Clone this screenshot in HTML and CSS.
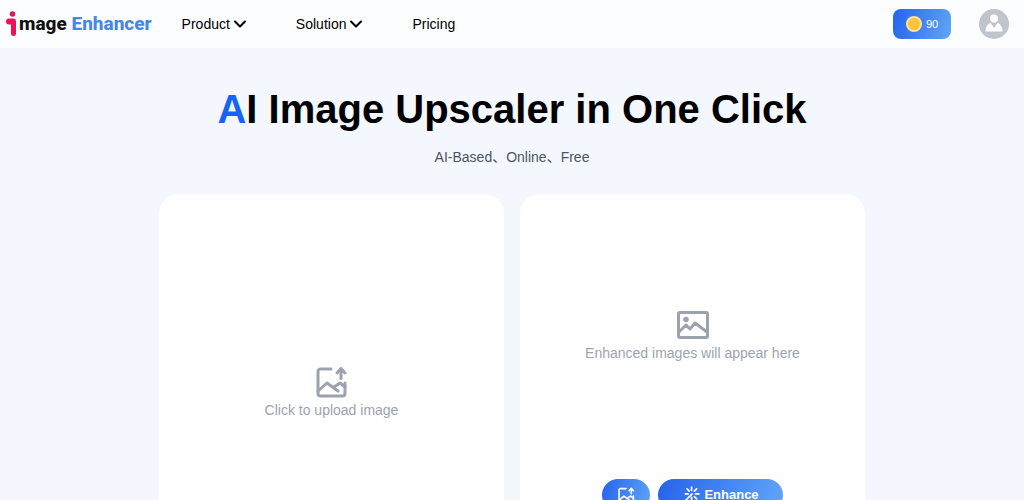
FILE: index.html
```html
<!DOCTYPE html>
<html lang="en">
<head>
    <meta charset="UTF-8">
    <meta name="viewport" content="width=device-width, initial-scale=1.0">
    <title>AI Image Upscaler</title>
    <link rel="stylesheet" href="styles.css">
</head>
<body>
    <header class="navbar">
        <a class="logo" href="#">
            <svg class="logo-mark" width="12" height="26" viewBox="0 0 12 26" aria-hidden="true">
                <circle cx="6.500" cy="3" r="2.800" fill="#d81b60"/>
                <path d="M3 7.500H7a3 3 0 0 1 3 3V22.500a2.500 2.500 0 0 1-5 0V13.500H3a3 3 0 0 1 0-6z" fill="#ee1155"/>
            </svg>
            <span>mage <span class="logo-blue">Enhancer</span></span>
        </a>
        <nav class="menu">
            <button type="button" class="menu-item">Product
                <svg width="12" height="8" viewBox="0 0 12 8" aria-hidden="true"><path d="M1 1.500l5 5 5-5"/></svg>
            </button>
            <button type="button" class="menu-item">Solution
                <svg width="12" height="8" viewBox="0 0 12 8" aria-hidden="true"><path d="M1 1.500l5 5 5-5"/></svg>
            </button>
            <a class="menu-item" href="#">Pricing</a>
        </nav>
        <div class="account">
            <button type="button" class="credits">
                <svg width="16" height="16" viewBox="0 0 16 16" aria-hidden="true">
                    <circle cx="8" cy="8" r="8" fill="#fde29a"/>
                    <circle cx="8" cy="8" r="6" fill="#fbc23c"/>
                </svg>
                90
            </button>
            <button type="button" class="avatar" aria-label="Account">
                <svg width="30" height="30" viewBox="0 0 30 30" aria-hidden="true">
                    <circle cx="15" cy="15" r="15" fill="#c0c4cc"/>
                    <circle cx="15" cy="9.500" r="4" fill="#fff"/>
                    <path d="M6.500 22.500c0-4.500 2-7.500 5-8.500l3.500 5 3.500-5c3 1 5 4 5 8.500z" fill="#fff"/>
                </svg>
            </button>
        </div>
    </header>

    <main class="container">
        <h1><span class="highlight">A</span>I Image Upscaler in One Click</h1>
        <p class="subtitle">AI-Based、Online、Free</p>

        <div class="panels">
            <button type="button" class="card upload">
                <svg class="icon" width="32" height="32" viewBox="0 0 32 32" aria-hidden="true">
                    <path d="M15 3H4.500A2.500 2.500 0 0 0 2 5.500v22A2.500 2.500 0 0 0 4.500 30h22a2.500 2.500 0 0 0 2.500-2.500V17"/>
                    <path d="M2 25l9-8 11 8M18 21l6-4 5 4M25 12.500V3M21 7l4-4.500L29 7"/>
                </svg>
                <span>Click to upload image</span>
            </button>
            <section class="card result">
                <div class="preview">
                    <svg class="icon" width="32" height="28" viewBox="0 0 32 28" aria-hidden="true">
                        <rect x="1.500" y="1.500" width="29" height="25" rx="1.500"/>
                        <circle class="dot" cx="9" cy="8.500" r="2.800"/>
                        <path d="M2 21l7-7 4 4 5-6 12 9"/>
                    </svg>
                    <span>Enhanced images will appear here</span>
                </div>
                <div class="actions">
                    <button type="button" class="btn btn-small" aria-label="Upload another image">
                        <svg class="icon" width="17" height="17" viewBox="0 0 32 32" aria-hidden="true">
                            <path d="M15 3H4.500A2.500 2.500 0 0 0 2 5.500v22A2.500 2.500 0 0 0 4.500 30h22a2.500 2.500 0 0 0 2.500-2.500V17"/>
                            <path d="M2 25l9-8 11 8M18 21l6-4 5 4M25 12.500V3M21 7l4-4.500L29 7"/>
                        </svg>
                    </button>
                    <button type="button" class="btn btn-main">
                        <svg class="wand" width="18" height="18" viewBox="0 0 16 16" aria-hidden="true">
                            <path d="M2 14l7-7M8.500 1v3M8.500 10v3M3 7h2.500M12 7h3M4.500 2.500l2 2M13 2.500l-2 2M13 11.500l-2-2"/>
                        </svg>
                        Enhance
                    </button>
                </div>
            </section>
        </div>
    </main>
</body>
</html>
```
FILE: styles.css
```css
* {
    box-sizing: border-box;
}
html {
    scrollbar-width: none;
}
body {
    margin: 0;
    font-family: "Liberation Sans", Arial, "Noto Sans CJK SC", sans-serif;
    font-size: 14px;
    color: #000;
    background-color: #f4f8fe;
}
button {
    font: inherit;
    color: inherit;
    border: none;
    background: none;
    padding: 0;
    cursor: pointer;
}
a {
    color: inherit;
    text-decoration: none;
}
svg {
    flex: none;
}
.navbar {
    display: flex;
    align-items: center;
    height: 48px;
    padding: 0 15px 0 6px;
    background-color: #fcfdff;
}
.logo {
    display: flex;
    align-items: center;
    gap: 1px;
    font-family: Roboto, sans-serif;
    font-size: 19px;
    line-height: 20px;
    font-weight: 800;
    color: #111;
}
.logo-mark {
    margin-top: -1px;
}
.logo span {
    padding-bottom: 1px;
}
.logo-blue {
    color: #4a86e0;
}
.menu {
    display: flex;
    align-items: center;
    gap: 50px;
    margin-left: 30px;
}
.menu-item {
    display: flex;
    align-items: center;
    gap: 4px;
    font-size: 14px;
}
.menu-item svg {
    fill: none;
    stroke: #000;
    stroke-width: 2;
    stroke-linecap: round;
    stroke-linejoin: round;
}
.account {
    display: flex;
    align-items: center;
    gap: 28px;
    margin-left: auto;
}
.credits {
    display: flex;
    align-items: center;
    justify-content: center;
    gap: 4px;
    width: 58px;
    height: 30px;
    border-radius: 8px;
    font-size: 11px;
    color: #fff;
    background: linear-gradient(105deg, #2563eb, #60a5fa);
}
.avatar {
    display: flex;
}
.container {
    max-width: 706px;
    margin: 0 auto;
}
h1 {
    margin: 0;
    padding-top: 36px;
    font-size: 40px;
    line-height: 50px;
    text-align: center;
}
.highlight {
    color: #1366f5;
}
.subtitle {
    margin: 12px 0 26px;
    font-size: 14px;
    line-height: 22px;
    text-align: center;
    color: #4b5563;
}
.panels {
    display: grid;
    grid-template-columns: 1fr 1fr;
    gap: 16px;
}
.card {
    display: flex;
    flex-direction: column;
    align-items: center;
    min-height: 398px;
    border-radius: 20px;
    background-color: #fff;
    color: #9ca3af;
    font-size: 14px;
    line-height: 20px;
}
.upload {
    justify-content: center;
    gap: 2px;
}
.icon {
    fill: none;
    stroke: #9ca3af;
    stroke-width: 3;
    stroke-linecap: round;
    stroke-linejoin: round;
}
.icon .dot {
    fill: #9ca3af;
    stroke: none;
}
.preview {
    display: flex;
    flex-direction: column;
    align-items: center;
    justify-content: center;
    gap: 4px;
    height: 285px;
}
.actions {
    display: flex;
    gap: 8px;
}
.btn {
    display: flex;
    align-items: center;
    justify-content: center;
    gap: 4px;
    height: 32px;
    border-radius: 16px;
    font-size: 13px;
    font-weight: bold;
    color: #fff;
    background: linear-gradient(105deg, #2563eb, #60a5fa);
}
.btn-small {
    width: 48px;
}
.btn-main {
    width: 125px;
}
.btn .icon {
    stroke: #fff;
}
.wand {
    fill: none;
    stroke: #fff;
    stroke-width: 1.5;
    stroke-linecap: round;
}
```
